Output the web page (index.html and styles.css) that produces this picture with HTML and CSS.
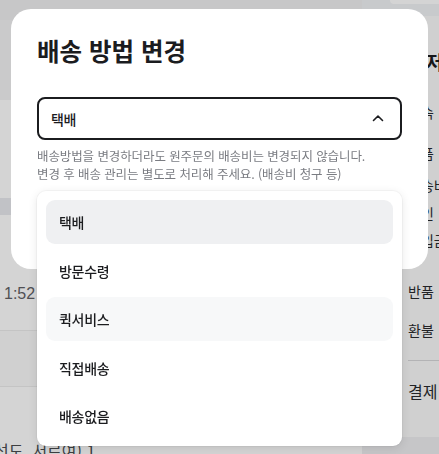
FILE: index.html
```html
<!DOCTYPE html>
<html lang="ko">
<head>
<meta charset="utf-8">
<title>배송 방법 변경</title>
<link rel="stylesheet" href="styles.css">
</head>
<body>
<div class="page">
  <main class="main">
    <div class="band band-top"></div>
    <div class="band band-grey"></div>
    <div class="band band-white1"></div>
    <div class="band band-stripe"></div>
    <div class="band band-white2"><span class="time">1:52</span></div>
    <div class="band band-soft"></div>
    <div class="band band-white3"></div>
    <div class="band band-last"><span class="cut">선도, 서르여) 1</span></div>
  </main>
  <aside class="aside">
    <div class="aside-top"><div class="aside-btn"></div></div>
    <div class="aside-title">주저</div>
    <ul class="aside-list">
      <li class="a1">계속</li>
      <li class="a2">상품</li>
      <li class="a3">배송비</li>
      <li class="a4">할인</li>
      <li class="a5">미입금</li>
      <li class="a6">반품</li>
      <li class="a7">환불</li>
    </ul>
    <div class="aside-div"></div>
    <div class="aside-pay">결제</div>
    <div class="aside-foot"></div>
  </aside>
</div>

<div class="overlay">
  <section class="modal">
    <h1 class="modal-title">배송 방법 변경</h1>
    <button class="select" type="button">
      <span class="select-value">택배</span>
      <svg class="chev" width="12" height="8" viewBox="0 0 12 8" aria-hidden="true">
        <path d="M1.5 6.5 L6 2 L10.5 6.5" fill="none" stroke="#1b1c1f" stroke-width="1.6" stroke-linecap="round" stroke-linejoin="round"/>
      </svg>
    </button>
    <p class="help">배송방법을 변경하더라도 원주문의 배송비는 변경되지 않습니다.<br>변경 후 배송 관리는 별도로 처리해 주세요. (배송비 청구 등)</p>
  </section>
  <ul class="menu">
    <li class="opt selected">택배</li>
    <li class="opt">방문수령</li>
    <li class="opt hover">퀵서비스</li>
    <li class="opt">직접배송</li>
    <li class="opt">배송없음</li>
  </ul>
</div>
</body>
</html>
```

FILE: styles.css
```css
* { box-sizing: border-box; }
html, body { margin: 0; padding: 0; }
body {
  width: 439px;
  height: 454px;
  overflow: hidden;
  font-family: "Noto Sans CJK KR", "Noto Sans", sans-serif;
  color: #1b1c1f;
  background: #ffffff;
}

/* background page */
.page {
  display: flex;
  width: 439px;
  height: 454px;
}
.main {
  flex: 0 0 362px;
  width: 362px;
  display: flex;
  flex-direction: column;
  background: #ffffff;
  overflow: hidden;
}
.band { width: 100%; flex-shrink: 0; }
.band-top { height: 20px; background: #f0f0f1; }
.band-grey { height: 80px; background: #f3f3f4; }
.band-white1 { height: 98px; background: #ffffff; }
.band-stripe { height: 17px; background: #e8eaee; }
.band-white2 {
  height: 115px;
  background: #ffffff;
  display: flex;
  align-items: center;
  padding-top: 42px;
}
.time {
  font-family: "Liberation Sans", "Noto Sans", sans-serif;
  font-size: 16px;
  color: #5f6166;
  padding-left: 4px;
}
.band-soft { height: 57px; background: #fafafa; border-top: 1px solid #ececec; border-bottom: 1px solid #ececec; }
.band-white3 { height: 49px; background: #ffffff; }
.band-last { flex: 1 1 auto; background: #ffffff; overflow: hidden; }
.cut {
  display: block;
  font-size: 16px;
  line-height: 20px;
  color: #4a4c50;
  margin-top: 4px;
  margin-left: -6px;
  white-space: nowrap;
}

.aside {
  flex: 0 0 77px;
  width: 77px;
  min-width: 0;
  overflow: hidden;
  background: #fbfbfb;
  display: flex;
  flex-direction: column;
  padding-left: 46px;
}
.aside-top {
  flex-shrink: 0;
  height: 16px;
  margin-left: -46px;
  background: #f1f3f6;
  padding-left: 28px;
}
.aside-btn { height: 4px; background: #ffffff; border-radius: 0 0 0 8px; }
.aside-title {
  margin-top: 34px;
  font-size: 19px;
  font-weight: 700;
  line-height: 24px;
  color: #1b1c1f;
  white-space: nowrap;
}
.aside-list {
  list-style: none;
  margin: 0;
  padding: 0;
  font-size: 14px;
  line-height: 20px;
  color: #2a2b2e;
  white-space: nowrap;
}
.aside-list li { height: 20px; }
.a1 { margin-top: 28px; }
.a2 { margin-top: 21px; }
.a3 { margin-top: 12px; }
.a4 { margin-top: 8px; }
.a5 { margin-top: 7px; }
.a6 { margin-top: 31px; }
.a7 { margin-top: 19px; }
.aside-div { flex-shrink: 0; margin-top: 20px; height: 1px; background: #d8d8da; }
.aside-pay {
  margin-top: 19px;
  font-size: 16px;
  line-height: 22px;
  color: #2a2b2e;
  white-space: nowrap;
}
.aside-foot { margin-top: 35px; margin-left: -46px; flex: 1 1 auto; background: #eeeff1; }

/* overlay + modal */
.overlay {
  position: fixed;
  inset: 0;
  background: rgba(0, 0, 0, 0.17);
}
.modal {
  position: absolute;
  left: 11px;
  top: 9px;
  width: 417px;
  height: 260px;
  background: #ffffff;
  border-radius: 20px;
  padding: 24px 26px 0 26px;
}
.modal-title {
  margin: 0;
  font-size: 24.5px;
  line-height: 36px;
  font-weight: 700;
  letter-spacing: 0;
  color: #1b1c1f;
}
.select {
  margin-top: 28px;
  width: 365px;
  height: 43px;
  display: flex;
  align-items: center;
  justify-content: space-between;
  padding: 0 16px 0 12px;
  background: #ffffff;
  border: 2px solid #1b1c1f;
  border-radius: 8px;
  font-family: inherit;
  cursor: pointer;
}
.select-value {
  font-size: 14px;
  font-weight: 500;
  color: #1b1c1f;
  letter-spacing: -0.3px;
}
.chev { display: block; margin-top: -2px; }
.help {
  margin: 7px 0 0 0;
  font-size: 12.5px;
  line-height: 17.5px;
  color: #7a7c82;
  letter-spacing: -0.1px;
  white-space: nowrap;
}

/* dropdown menu overlaying the modal */
.menu {
  position: absolute;
  left: 37px;
  top: 191px;
  width: 365px;
  height: 255px;
  margin: 0;
  padding: 9px 9px;
  list-style: none;
  background: #ffffff;
  border-radius: 9px;
  box-shadow: 0 2px 10px rgba(0, 0, 0, 0.10), 0 0 0 1px rgba(0, 0, 0, 0.03);
  display: flex;
  flex-direction: column;
  gap: 4.5px;
}
.opt {
  height: 44px;
  flex-shrink: 0;
  display: flex;
  align-items: center;
  padding-left: 13px;
  border-radius: 9px;
  font-size: 14px;
  font-weight: 500;
  color: #1b1c1f;
  letter-spacing: -0.3px;
}
.opt.selected { background: #eff0f2; }
.opt.hover { background: #f7f8f9; }
```
